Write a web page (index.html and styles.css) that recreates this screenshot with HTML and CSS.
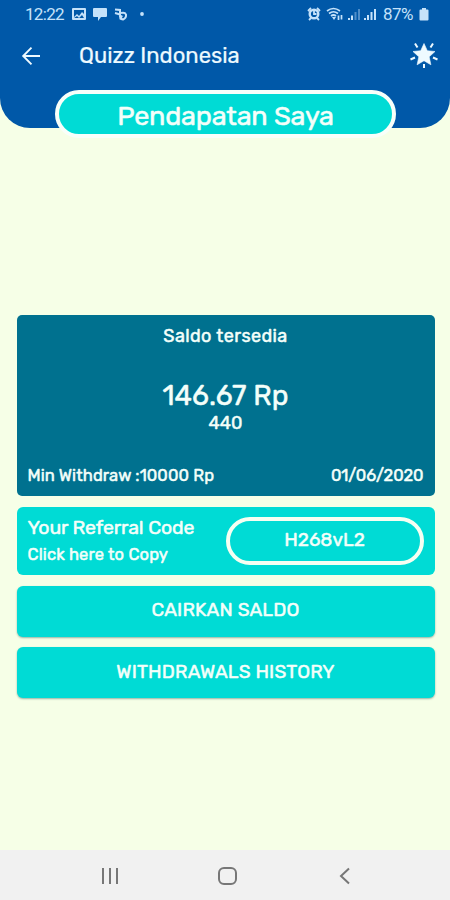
FILE: index.html
```html
<!DOCTYPE html>
<html lang="id">
<head>
<meta charset="utf-8">
<title>Quizz Indonesia</title>
<link rel="stylesheet" href="styles.css">
</head>
<body>
<div class="screen">
  <header class="header">
    <div class="status">
      <span class="clock">12:22</span>
      <svg class="notices" width="130" height="14" viewBox="0 0 130 14">
        <path fill="currentColor" fill-rule="evenodd" d="M1 1h12a1 1 0 0 1 1 1v10a1 1 0 0 1-1 1H1a1 1 0 0 1-1-1V2a1 1 0 0 1 1-1zM2 3v7l3-3 2 2 3-4 2 2V3zM2 11h10l-2-3-3 3-2-2z"/>
        <path fill="currentColor" d="M22 1h12q1 0 1 1v7q0 1-1 1h-5l-3 4v-4h-4q-1 0-1-1V2q0-1 1-1z"/>
        <path fill="none" stroke="currentColor" stroke-width="2" d="M43 2.500L48 3v4q-.5 5 3 5.500Q54.500 11 54 7.500 53 5 49 6M43 6l5 1.500M48 12.500l2-4"/>
        <circle cx="70" cy="7" r="1.900" fill="currentColor"/>
      </svg>
      <svg class="signals" width="72" height="16" viewBox="0 0 72 16">
        <g fill="none" stroke="currentColor">
          <circle cx="7" cy="8" r="4.300" stroke-width="2.400"/>
          <path stroke-width="1.800" d="M7 5v3h2.500M1 5l3-3M13 5l-3-3M2 14l2-2M12 14l-2-2"/>
          <path stroke-width="1.700" d="M20 5q6.500-5 13 0M22 7.500q4.500-3.500 9 0M24 10q2.500-2 5 0"/>
          <path stroke-width="1.700" d="M31.500 14V9.500M34.500 9v4.500"/>
        </g>
        <path fill="currentColor" d="M25 11h4l-2 3z"/>
        <path fill="currentColor" d="M41 12h2v2h-2zM44 9.500h2V14h-2zM57 12h2v2h-2zM60 9h2v5h-2zM63.500 6h2v8h-2zM67 3h2v11h-2z"/>
        <path fill="currentColor" opacity=".4" d="M47.500 6h2v8h-2zM51 3h2v11h-2z"/>
      </svg>
      <span class="percent">87%</span>
      <svg class="battery" width="10" height="14" viewBox="0 0 10 14"><path fill="currentColor" d="M3 1h4v1.500h1.500q1 0 1 1v9q0 1-1 1h-7q-1 0-1-1v-9q0-1 1-1H3z"/></svg>
    </div>
    <div class="toolbar">
      <svg class="back" width="20" height="20" viewBox="0 0 20 20"><path fill="none" stroke="currentColor" stroke-width="1.900" d="M19 10H2M10.500 1.700L2.200 10l8.300 8.300"/></svg>
      <h1 class="app-name">Quizz Indonesia</h1>
      <svg class="star" width="28" height="28" viewBox="0 0 28 28">
        <path fill="currentColor" stroke="currentColor" stroke-width=".6" d="M14 1.500l3.300 7.200 7.700.8-5.800 5.300 1.700 8-6.900-4.100-6.900 4.100 1.700-8L3 9.500l7.700-.8z"/>
        <path stroke="currentColor" stroke-width="2" d="M5 1.500l2.500 4M23 1.500l-2.500 4M.500 17.500l4.500-2M27.500 17.500l-4.500-2M14 22v4"/>
      </svg>
    </div>
    <div class="page-title"><span class="t-title">Pendapatan Saya</span></div>
  </header>
  <main class="content">
    <section class="balance">
      <div class="t-label">Saldo tersedia</div>
      <div class="t-amount">146.67 Rp</div>
      <div class="t-points">440</div>
      <div class="balance-foot"><span class="t-min">Min Withdraw :10000 Rp</span><span class="t-date">01/06/2020</span></div>
    </section>
    <section class="referral">
      <div class="referral-text">
        <div><span class="t-ref">Your Referral Code</span></div>
        <div><span class="t-copy">Click here to Copy</span></div>
      </div>
      <div class="code"><span class="t-code">H268vL2</span></div>
    </section>
    <div class="action"><span class="t-cash">CAIRKAN SALDO</span></div>
    <div class="action"><span class="t-history">WITHDRAWALS HISTORY</span></div>
  </main>
  <nav class="navbar">
    <svg width="18" height="18" viewBox="0 0 18 18"><path stroke="currentColor" stroke-width="2" d="M2 1v16M9 1v16M16 1v16"/></svg>
    <svg width="20" height="20" viewBox="0 0 20 20"><rect x="1" y="2" width="17" height="16" rx="5" fill="none" stroke="currentColor" stroke-width="2"/></svg>
    <svg width="18" height="18" viewBox="0 0 18 18"><path fill="none" stroke="currentColor" stroke-width="2" d="M13 1.500L5 9l8 7.500"/></svg>
  </nav>
</div>
</body>
</html>
```
FILE: styles.css
```css
* { box-sizing: border-box; }
body { margin: 0; font-family: "Rubik", Roboto, sans-serif; color: #f4fffa; }
svg { display: block; flex: none; }
.screen { width: 450px; height: 900px; display: flex; flex-direction: column; background: #f6ffe7; }
.header { height: 128px; background: #0058a8; border-radius: 0 0 30px 30px; display: flex; flex-direction: column; align-items: center; flex: none; }
.status { width: 100%; height: 28px; padding: 0 21px 0 25px; display: flex; align-items: center; color: #c5e2fa; font-family: Roboto, sans-serif; font-size: 17px; flex: none; }
.clock { width: 47px; letter-spacing: -0.7px; }
.signals { margin-left: auto; margin-right: 4px; }
.percent { width: 36px; letter-spacing: -0.6px; }
.toolbar { width: 100%; height: 62px; padding: 0 12px 6px 21px; display: flex; align-items: center; flex: none; color: #eefaff; }
.app-name { margin: 0 auto 0 38px; font-size: 22px; line-height: 26px; font-weight: 400; -webkit-text-stroke: 0.2px currentColor; }
.page-title { width: 341px; height: 48px; padding: 3px 0 0 1px; border: 4px solid #f8fffa; border-radius: 24px; background: #00dbd5; display: flex; justify-content: center; align-items: center; flex: none; }
.t-title { font-size: 27px; letter-spacing: -0.2px; -webkit-text-stroke: 0.5px currentColor; }
.content { flex: 1; padding: 187px 15.5px 0 16.5px; display: flex; flex-direction: column; font-weight: 400; -webkit-text-stroke: 0.5px currentColor; }
.balance { height: 181px; border-radius: 5px; background: #00718f; padding: 10px 11px; text-align: center; display: flex; flex-direction: column; flex: none; }
.t-label { font-size: 18px; line-height: 22px; letter-spacing: 0.4px; }
.t-amount { font-size: 28px; line-height: 34px; margin-top: 32px; letter-spacing: 0.1px; }
.t-points { font-size: 18px; line-height: 20px; }
.balance-foot { margin-top: auto; display: flex; justify-content: space-between; font-size: 16.5px; line-height: 20px; }
.t-min { letter-spacing: 0.1px; }
.t-date { letter-spacing: -0.1px; }
.referral { height: 68.5px; margin-top: 10.5px; padding: 0 11px; border-radius: 6px; background: #00dbd5; display: flex; justify-content: space-between; align-items: center; flex: none; }
.referral-text { display: grid; gap: 3px; line-height: 23px; }
.t-ref { font-size: 19.5px; letter-spacing: -0.12px; }
.t-copy { font-size: 16.5px; letter-spacing: 0.15px; }
.code { width: 198px; height: 48px; padding-bottom: 3px; border: 4px solid #f6fff2; border-radius: 24px; display: flex; align-items: center; justify-content: center; }
.t-code { font-size: 19px; }
.action { height: 51px; margin-top: 10.5px; padding-bottom: 3px; border-radius: 6px; background: #00dbd5; box-shadow: 0 1px 2px rgba(0, 70, 70, .4); display: flex; align-items: center; justify-content: center; font-size: 19px; letter-spacing: 0.15px; flex: none; }
.navbar { height: 50px; padding: 2px 96px 0 101px; background: #f1f1f1; color: #777; display: flex; align-items: center; justify-content: space-between; flex: none; }
```
